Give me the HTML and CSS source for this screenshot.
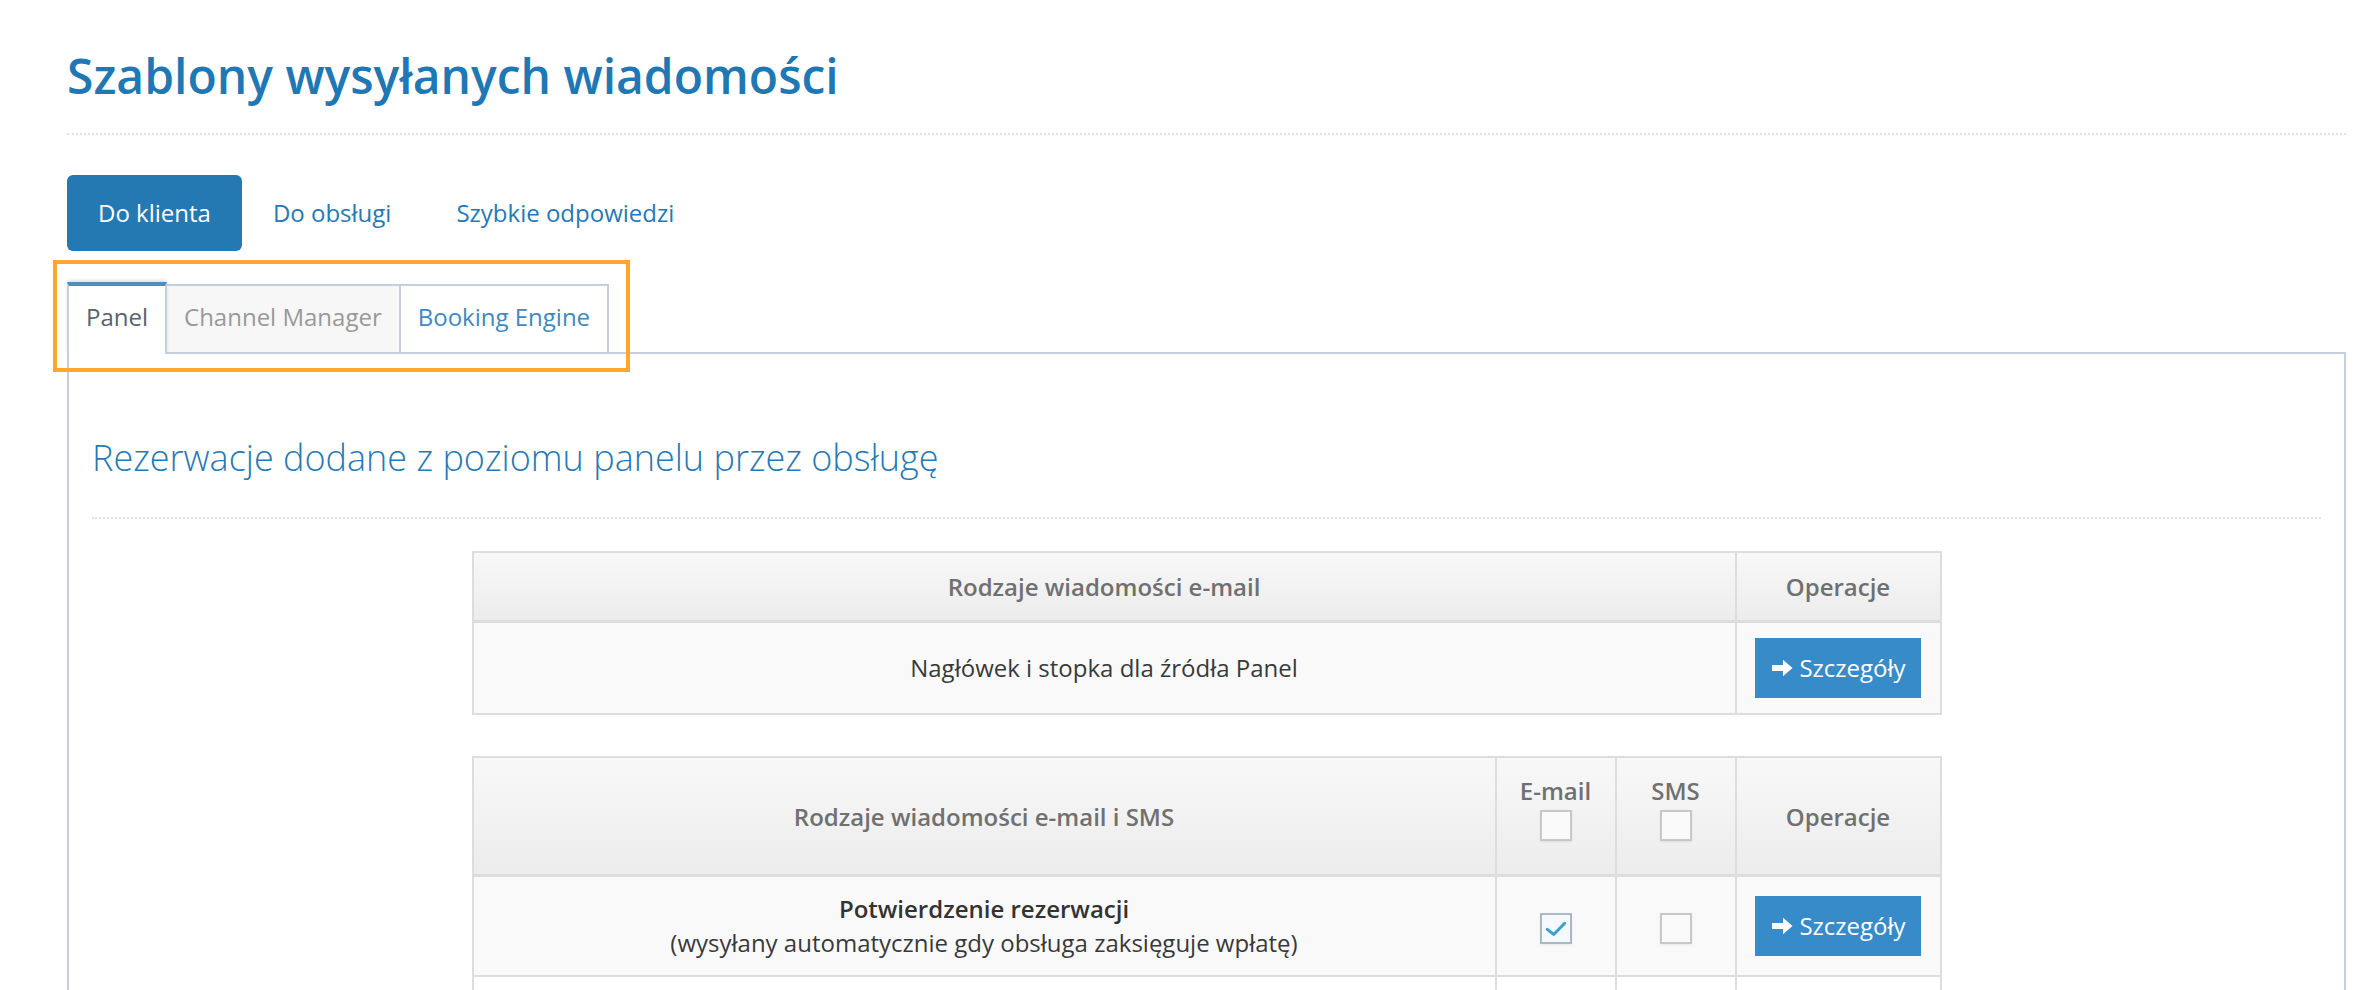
FILE: index.html
```html
<!DOCTYPE html>
<html lang="pl">
<head>
<meta charset="utf-8">
<title>Szablony wysyłanych wiadomości</title>
<link rel="stylesheet" href="styles.css">
</head>
<body>
<div class="page">
  <header class="page-header">
    <h1>Szablony wysyłanych wiadomości</h1>
  </header>

  <nav class="pills">
    <a class="pill active">Do klienta</a>
    <a class="pill">Do obsługi</a>
    <a class="pill">Szybkie odpowiedzi</a>
  </nav>

  <div class="tabbable">
    <ul class="tabs">
      <li class="tab active">Panel</li>
      <li class="tab muted">Channel Manager</li>
      <li class="tab hovered">Booking Engine</li>
    </ul>
    <div class="highlight"></div>
  </div>

  <div class="tab-content">
    <h3 class="section-title">Rezerwacje dodane z poziomu panelu przez obsługę</h3>

    <table class="tpl-table">
      <colgroup>
        <col class="c-main1">
        <col class="c-ops">
      </colgroup>
      <thead>
        <tr>
          <th>Rodzaje wiadomości e-mail</th>
          <th>Operacje</th>
        </tr>
      </thead>
      <tbody>
        <tr class="odd">
          <td>Nagłówek i stopka dla źródła Panel</td>
          <td><a class="btn"><svg class="arrow" viewBox="0 0 21 18" aria-hidden="true"><path d="M0 6h11V0.8L20.5 9 11 17.2V12H0z"/></svg>Szczegóły</a></td>
        </tr>
      </tbody>
    </table>

    <table class="tpl-table second">
      <colgroup>
        <col class="c-main2">
        <col class="c-chk">
        <col class="c-chk">
        <col class="c-ops">
      </colgroup>
      <thead>
        <tr>
          <th>Rodzaje wiadomości e-mail i SMS</th>
          <th><div class="th-label">E-mail</div><span class="cb head"></span></th>
          <th><div class="th-label">SMS</div><span class="cb head"></span></th>
          <th>Operacje</th>
        </tr>
      </thead>
      <tbody>
        <tr class="odd">
          <td><strong>Potwierdzenie rezerwacji</strong><br>(wysyłany automatycznie gdy obsługa zaksięguje wpłatę)</td>
          <td><span class="cb checked"><svg viewBox="0 0 32 31" aria-hidden="true"><path d="M6 16.5l7.3 5.8L26 9.5"/></svg></span></td>
          <td><span class="cb"></span></td>
          <td><a class="btn"><svg class="arrow" viewBox="0 0 21 18" aria-hidden="true"><path d="M0 6h11V0.8L20.5 9 11 17.2V12H0z"/></svg>Szczegóły</a></td>
        </tr>
        <tr class="filler">
          <td></td>
          <td></td>
          <td></td>
          <td></td>
        </tr>
      </tbody>
    </table>
  </div>
</div>
</body>
</html>
```
FILE: styles.css
```css
html, body {
  margin: 0;
  padding: 0;
  background: #ffffff;
  overflow: hidden;
}

body {
  font-family: "Open Sans", "Noto Sans", sans-serif;
  font-size: 24px;
  color: #393939;
}

.page {
  padding: 46px 16px 0 67px;
}

/* ---------- page header ---------- */
.page-header {
  padding-bottom: 27px;
  border-bottom: 2px dotted #e2e2e2;
}

.page-header h1 {
  margin: 0;
  font-size: 48px;
  line-height: 60px;
  font-weight: 600;
  color: #1f78b4;
}

/* ---------- pills ---------- */
.pills {
  display: flex;
  gap: 0;
  margin-top: 40px;
}

.pill {
  display: block;
  padding: 22px 31px;
  line-height: 32px;
  color: #2679b5;
  border-radius: 6px;
  cursor: pointer;
}

.pill:last-child {
  margin-left: 3px;
}

.pill.active {
  background: #2479b2;
  color: #ffffff;
}

/* ---------- tabs ---------- */
.tabbable {
  position: relative;
  margin-top: 31px;
  margin-bottom: -2px;
  z-index: 1;
}

.tabs {
  display: flex;
  align-items: flex-end;
  margin: 0;
  padding: 0;
  list-style: none;
}

.tab {
  position: relative;
  padding: 16px 17px 20px;
  line-height: 30px;
  border: 2px solid #c5d0dc;
  background: #ffffff;
  color: #999999;
}

.tab + .tab {
  margin-left: -2px;
}

.tab.active {
  z-index: 2;
  border-top: 4px solid #4c8fbd;
  border-bottom: 0;
  padding-bottom: 22px;
  color: #576373;
  background: #ffffff;
  box-shadow: 0 -2px 3px rgba(0, 0, 0, 0.12);
}

.tab.muted {
  background: #f7f7f7;
  color: #999999;
}

.tab.hovered {
  background: #ffffff;
  color: #4089c2;
}

.highlight {
  position: absolute;
  left: -14px;
  top: -22px;
  width: 577px;
  height: 112px;
  box-sizing: border-box;
  border: 4px solid #ffa62b;
  z-index: 5;
  pointer-events: none;
}

/* ---------- tab content ---------- */
.tab-content {
  border: 2px solid #c5d0dc;
  padding: 0 23px 40px;
  min-height: 700px;
}

.section-title {
  margin: 82px 0 0;
  padding-bottom: 37px;
  border-bottom: 2px dotted #e3e3e3;
  font-size: 36px;
  line-height: 44px;
  font-weight: 300;
  color: #2679b5;
}

/* ---------- tables ---------- */
.tpl-table {
  width: 1468px;
  margin: 32px auto 0;
  border-collapse: collapse;
  table-layout: fixed;
  border: 2px solid #dddddd;
}

.tpl-table.second {
  margin-top: 41px;
}

.c-main1 { width: 1263px; }
.c-main2 { width: 1023px; }
.c-chk   { width: 120px; }
.c-ops   { width: 205px; }

.tpl-table th {
  padding: 17px 12px;
  line-height: 33px;
  font-weight: 600;
  color: #707070;
  text-align: center;
  vertical-align: middle;
  background: linear-gradient(#f8f8f8, #ececec);
  border: 2px solid #dddddd;
  border-bottom-width: 3px;
}

.tpl-table td {
  padding: 15px 12px;
  line-height: 34px;
  text-align: center;
  vertical-align: middle;
  border: 2px solid #dddddd;
  background: #ffffff;
}

.tpl-table tr.odd td {
  background: #f9f9f9;
}

.tpl-table tr.filler td {
  height: 70px;
}

.tpl-table strong {
  font-weight: 600;
  color: #333333;
}

.th-label {
  line-height: 32px;
}

/* ---------- button ---------- */
.btn {
  display: inline-flex;
  align-items: center;
  gap: 6px;
  height: 60px;
  padding: 0 15px 0 17px;
  box-sizing: border-box;
  background: #378bc8;
  color: #ffffff;
  font-size: 24px;
  line-height: 30px;
  cursor: pointer;
  vertical-align: middle;
}

.btn .arrow {
  width: 21px;
  height: 18px;
  fill: #ffffff;
  flex: none;
}

/* ---------- checkboxes ---------- */
.cb {
  display: inline-block;
  width: 32px;
  height: 31px;
  box-sizing: border-box;
  border: 2px solid #c8c8c8;
  background: #fafafa;
  box-shadow: 0 1px 2px rgba(0, 0, 0, 0.08);
  vertical-align: middle;
}

.cb.head {
  display: block;
  margin: 3px auto 16px;
}

.cb.checked {
  border-color: #a9b8c7;
  background: #f5f8fc;
}

.cb.checked svg {
  display: block;
  width: 28px;
  height: 27px;
  fill: none;
  stroke: #32a3ce;
  stroke-width: 3.4;
  stroke-linecap: round;
  stroke-linejoin: round;
}
```
